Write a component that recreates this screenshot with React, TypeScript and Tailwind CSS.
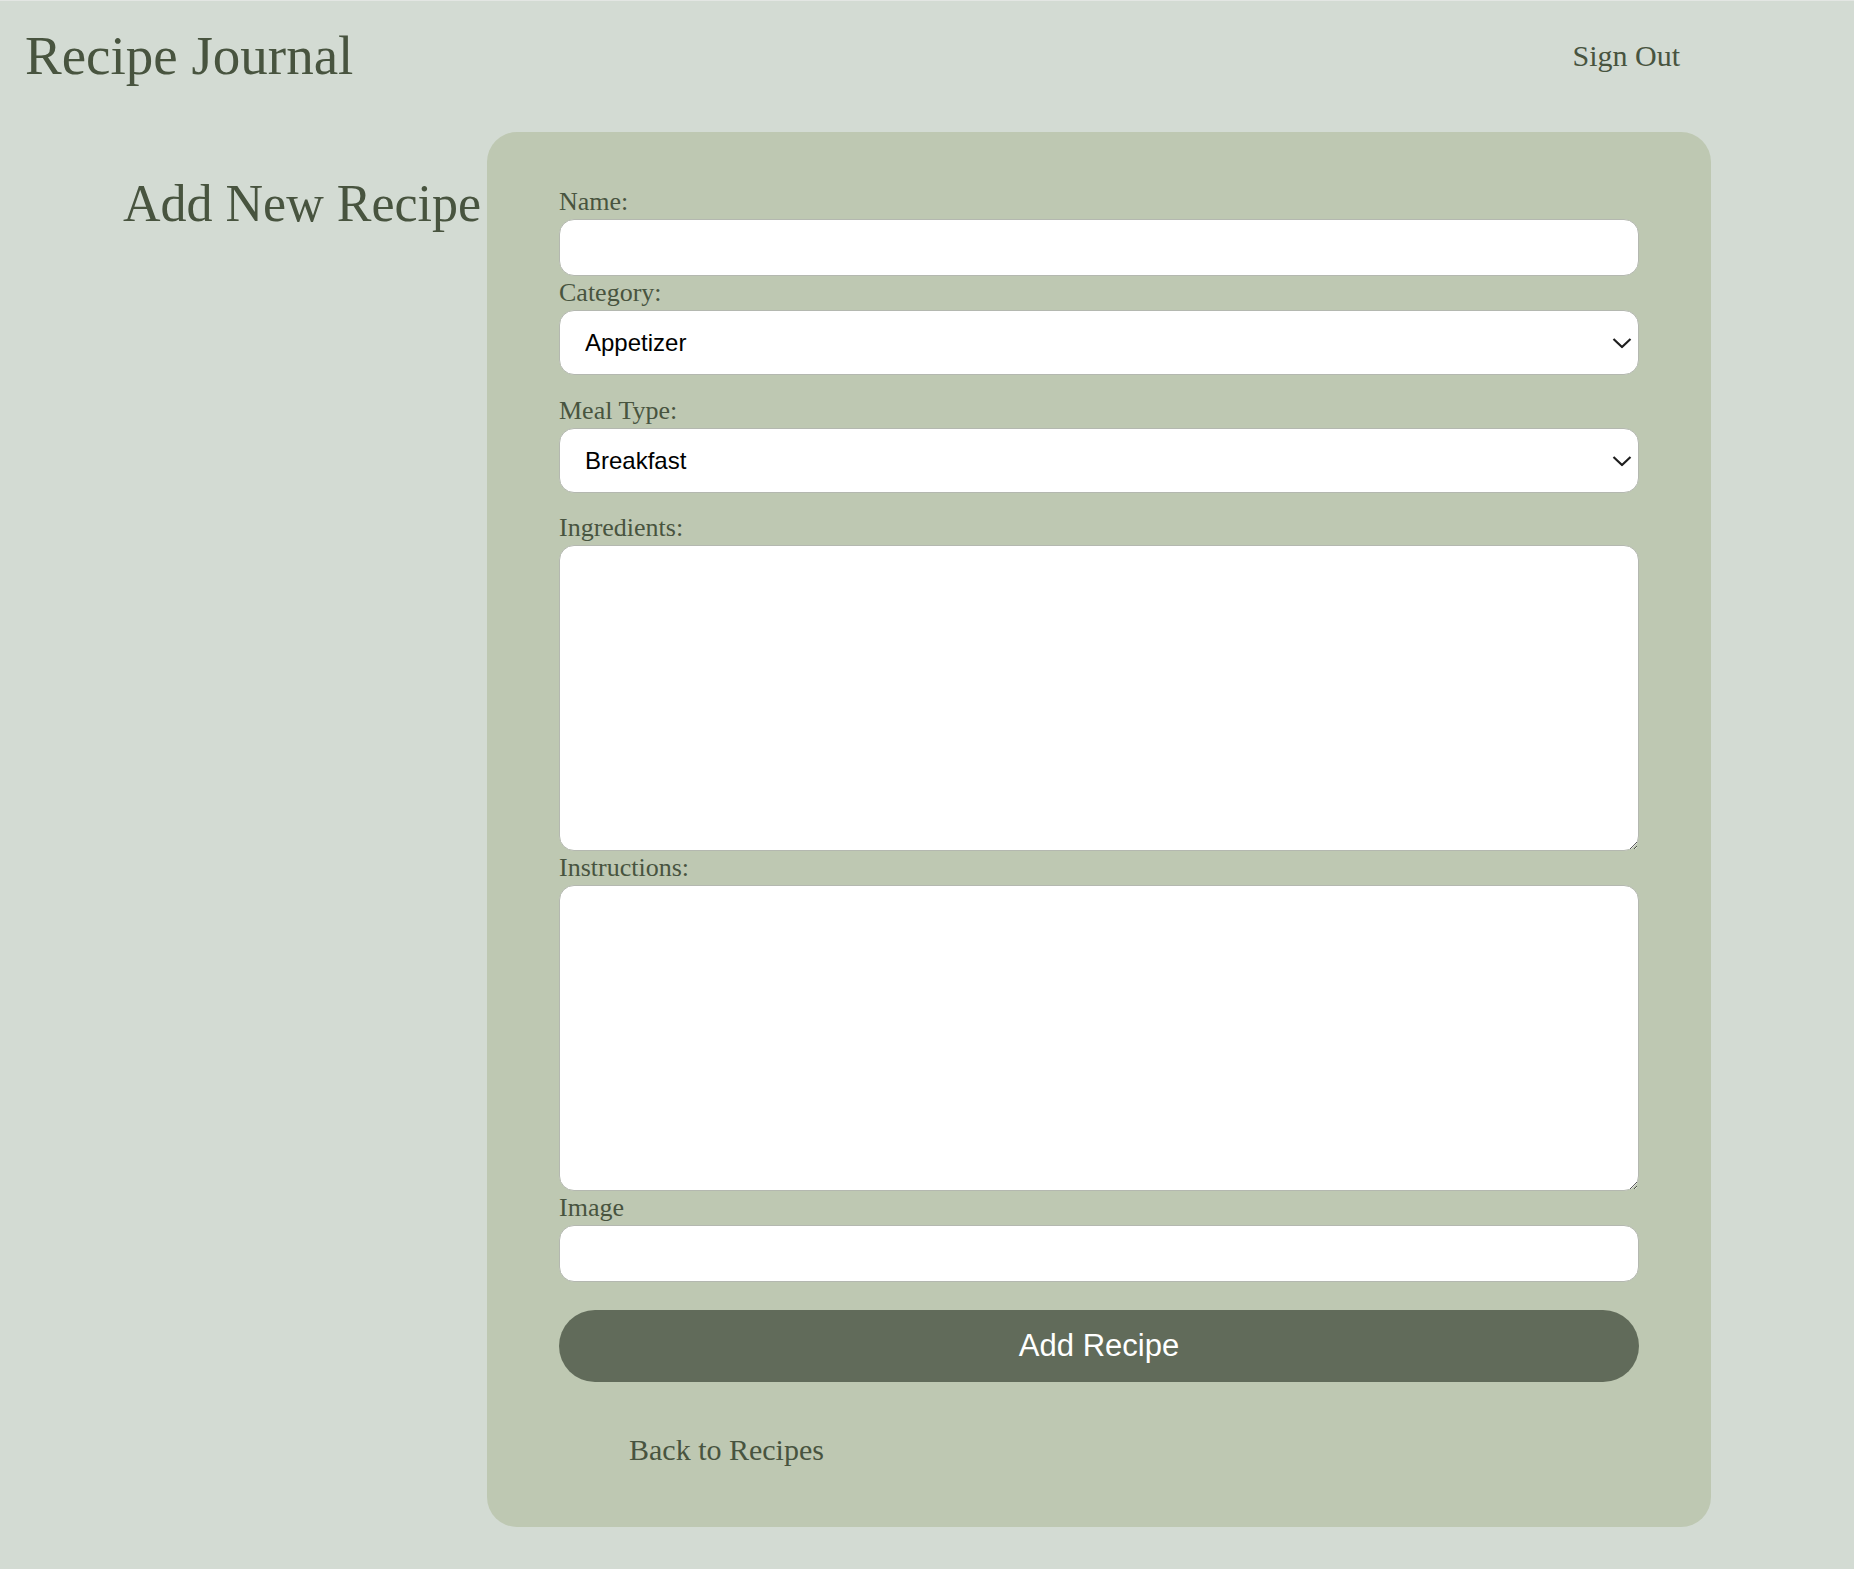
import { ChangeEvent, useState } from "react";

const serif = "font-['Liberation_Serif',serif]";
const sans = "font-['Liberation_Sans',Arial,sans-serif]";

function Chevron() {
  return (
    <svg
      className="pointer-events-none absolute right-[7px] top-1/2 -translate-y-1/2"
      width="20"
      height="11"
      viewBox="0 0 20 11"
      fill="none"
    >
      <path d="M1.5 1.5 L10 9.5 L18.5 1.5" stroke="#1f1f1f" strokeWidth="2.2" />
    </svg>
  );
}

export default function App() {
  const [formData, setFormData] = useState({
    name: "",
    category: "Appetizer",
    mealType: "Breakfast",
    ingredients: "",
    instructions: "",
    image: "",
  });

  const handleChange = (
    e: ChangeEvent<HTMLInputElement | HTMLSelectElement | HTMLTextAreaElement>
  ) => {
    const { name, value } = e.target;
    setFormData((prev) => ({ ...prev, [name]: value }));
  };

  const labelClass = `${serif} block text-[26px] leading-[34px] text-[#48543f]`;
  const fieldClass = `${sans} block w-full bg-white border border-[#b4b8b0] rounded-[15px] text-[24px] text-black outline-none`;

  return (
    <div className="min-h-[1569px] bg-[#d3dbd3] border-t border-[#e3e6e3] text-[#48543f]">
      <header className="flex items-center justify-between pl-[25px] pr-[174px] pt-[23px]">
        <h1 className={`${serif} text-[55px] leading-[64px]`}>Recipe Journal</h1>
        <a className={`${serif} text-[30px] leading-[36px] cursor-pointer`}>Sign Out</a>
      </header>

      <main className="flex mt-[44px] pl-[123px]">
        <div className="w-[364px] shrink-0">
          <h2 className={`${serif} mt-[40px] text-[52px] leading-[64px] whitespace-nowrap`}>
            Add New Recipe
          </h2>
        </div>

        <form
          onSubmit={(e) => e.preventDefault()}
          className="w-[1224px] shrink-0 bg-[#bec8b2] rounded-[30px] pt-[53px] pb-[59px] px-[72px] flex flex-col"
        >
          <label className={labelClass}>Name:</label>
          <input
            type="text"
            name="name"
            value={formData.name}
            onChange={handleChange}
            className={`${fieldClass} h-[57px] px-[20px]`}
          />

          <label className={labelClass}>Category:</label>
          <div className="relative mb-[19px]">
            <select
              name="category"
              value={formData.category}
              onChange={handleChange}
              className={`${fieldClass} h-[65px] pl-[25px] pr-[40px] appearance-none`}
            >
              <option>Appetizer</option>
              <option>Main Course</option>
              <option>Dessert</option>
              <option>Side Dish</option>
            </select>
            <Chevron />
          </div>

          <label className={labelClass}>Meal Type:</label>
          <div className="relative mb-[18px]">
            <select
              name="mealType"
              value={formData.mealType}
              onChange={handleChange}
              className={`${fieldClass} h-[65px] pl-[25px] pr-[40px] appearance-none`}
            >
              <option>Breakfast</option>
              <option>Lunch</option>
              <option>Dinner</option>
              <option>Snack</option>
            </select>
            <Chevron />
          </div>

          <label className={labelClass}>Ingredients:</label>
          <textarea
            name="ingredients"
            value={formData.ingredients}
            onChange={handleChange}
            className={`${fieldClass} h-[306px] p-[12px]`}
          />

          <label className={labelClass}>Instructions:</label>
          <textarea
            name="instructions"
            value={formData.instructions}
            onChange={handleChange}
            className={`${fieldClass} h-[306px] p-[12px]`}
          />

          <label className={labelClass}>Image</label>
          <input
            type="text"
            name="image"
            value={formData.image}
            onChange={handleChange}
            className={`${fieldClass} h-[57px] px-[20px]`}
          />

          <button
            type="submit"
            className={`${sans} mt-[28px] h-[72px] w-full rounded-full bg-[#616b5a] text-white text-[31px]`}
          >
            Add Recipe
          </button>

          <a className={`${serif} mt-[50px] ml-[70px] text-[30px] leading-[36px] cursor-pointer self-start`}>
            Back to Recipes
          </a>
        </form>
      </main>
    </div>
  );
}
